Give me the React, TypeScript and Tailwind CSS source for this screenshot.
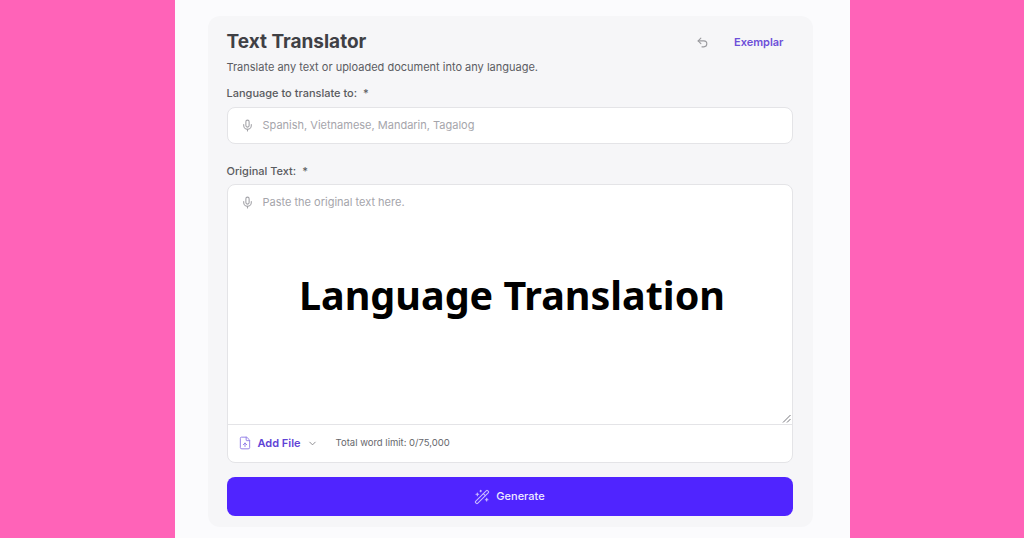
import { ChevronDown, FileUp, Mic, Undo2, WandSparkles } from 'lucide-react';

export default function App() {
  return (
    <div className="relative flex h-[538px] w-[1024px] justify-center overflow-hidden bg-[#ff63b8] font-['Inter',sans-serif]">
      <div className="h-full w-[675px] bg-[#fbfbfd] pl-[33px] pr-[37px] pt-4">
        <div className="h-[511px] rounded-xl bg-[#f6f6f8] pl-[19px] pr-[20px] pt-[15px]">
          <div className="flex items-start justify-between">
            <h1 className="text-[19px] font-bold leading-[22px] text-[#3f4045]">Text Translator</h1>
            <div className="mr-[9px] mt-[3px] flex items-center gap-[25px]">
              <Undo2 className="h-[13px] w-[13px] text-[#9a9a9e]" strokeWidth={2} />
              <span className="text-[11px] font-semibold leading-4 text-[#6d4fd8]">Exemplar</span>
            </div>
          </div>
          <p className="mt-[6px] text-[11px] leading-4 text-[#5b5c62]">Translate any text or uploaded document into any language.</p>

          <label className="mt-[10px] block text-[11px] font-medium leading-4 text-[#5a5b60]">
            Language to translate to:<span className="ml-[6px]">*</span>
          </label>
          <div className="mt-[6px] flex h-[37px] items-center rounded-lg border border-[#e4e4e7] bg-white pl-[13px]">
            <Mic className="h-[13px] w-[13px] text-[#a3a3a8]" />
            <span className="ml-[9px] text-[11px] text-[#a5a5ab]">Spanish, Vietnamese, Mandarin, Tagalog</span>
          </div>

          <label className="mt-[19px] block text-[11px] font-medium leading-4 text-[#5a5b60]">
            Original Text:<span className="ml-[6px]">*</span>
          </label>
          <div className="mt-[5px] h-[279px] rounded-lg border border-[#e4e4e7] bg-white">
            <div className="relative h-[240px] border-b border-[#e4e4e7]">
              <div className="flex items-center pl-[13px] pt-[9px]">
                <Mic className="h-[13px] w-[13px] text-[#a3a3a8]" />
                <span className="ml-[9px] text-[11px] leading-4 text-[#a5a5ab]">Paste the original text here.</span>
              </div>
              <svg className="absolute bottom-[1px] right-[1px] h-[9px] w-[9px] text-[#77777c]" viewBox="0 0 9 9" fill="none" stroke="currentColor" strokeWidth="1">
                <path d="M1 8.5 8.5 1M5 8.5 8.5 5" />
              </svg>
            </div>
            <div className="flex h-[36px] items-center pl-[10px]">
              <FileUp className="h-[14px] w-[14px] text-[#8f7be6]" strokeWidth={1.6} />
              <span className="ml-[6px] text-[11px] font-semibold text-[#5f43d6]">Add File</span>
              <ChevronDown className="ml-[6px] h-[11px] w-[11px] text-[#85858a]" />
              <span className="ml-[18px] text-[9.5px] text-[#66676c]">Total word limit: 0/75,000</span>
            </div>
          </div>

          <button className="mt-[14px] flex h-[39px] w-full items-center justify-center rounded-lg bg-[#5024ff] text-[11px] font-medium text-[#efeaff]">
            <WandSparkles className="mr-[6px] h-[16px] w-[16px] text-[#c9bbff]" strokeWidth={1.6} />
            Generate
          </button>
        </div>
      </div>
      <div className="absolute inset-x-0 top-[268px] text-center font-['Noto_Sans',sans-serif] text-[39.5px] font-bold leading-[54px] text-black">
        Language Translation
      </div>
    </div>
  );
}
